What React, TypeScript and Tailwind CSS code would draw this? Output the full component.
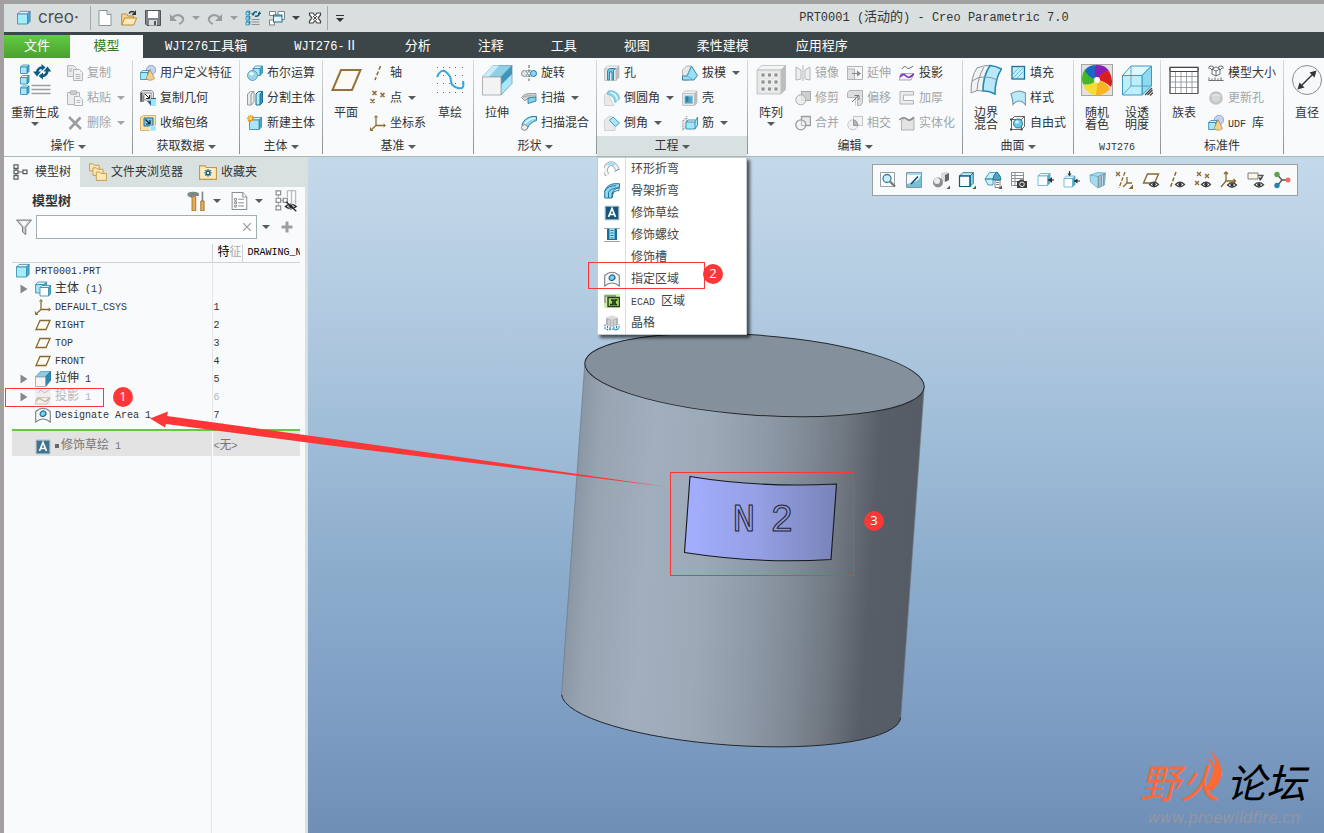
import type { ReactNode } from "react";
import clsx from "clsx";

/* ---------- drawing helpers ---------- */

const Cube = ({
  x,
  y,
  s,
  d,
  front = "#a8e6fb",
  top = "#e4f8fe",
  side = "#4ea9cf",
  line = "#2f86ab",
}: {
  x: number;
  y: number;
  s: number;
  d: number;
  front?: string;
  top?: string;
  side?: string;
  line?: string;
}) => (
  <g stroke={line} strokeWidth=".8" strokeLinejoin="round">
    <path d={`M${x} ${y}l${d} ${-d}h${s}l${-d} ${d}z`} fill={top} />
    <path d={`M${x + s} ${y}l${d} ${-d}v${s}l${-d} ${d}z`} fill={side} />
    <rect x={x} y={y} width={s} height={s} fill={front} />
  </g>
);

const GrayCube = ({ x, y, s, d }: { x: number; y: number; s: number; d: number }) => (
  <Cube x={x} y={y} s={s} d={d} front="#e6e6e6" top="#f4f4f4" side="#bdbdbd" line="#b9bcbe" />
);

const Eye = ({ x = 8.5, y = 12.5 }: { x?: number; y?: number }) => (
  <g>
    <path
      d={`M${x - 4.5} ${y}q4.5 -4.5 9 0q-4.5 4.5 -9 0z`}
      fill="#fff"
      stroke="#444"
      strokeWidth="1.3"
    />
    <circle cx={x} cy={y} r="1.7" fill="#333" />
  </g>
);

const Corner = () => <path d="M18 14.5v3.5h-3.5z" fill="#555" />;

const brown = "#8a6a2c";

const icons: Record<string, ReactNode> = {
  part: <Cube x={1.5} y={4} s={10} d={2.6} front="#a6ecff" />,
  newFile: (
    <g stroke="#8f9496" fill="#fff">
      <path d="M2 .5h8l4 4v11h-12z" />
      <path d="M10 .5v4h4" fill="#e3e3e3" />
    </g>
  ),
  open: (
    <g>
      <path d="M.7 15V4h5l1 2h6v3" fill="#f3d48f" stroke="#b98d3c" />
      <path d="M.7 15l3-7h12l-3 7z" fill="#fde9b5" stroke="#b98d3c" />
      <path d="M8 3.500q2-3 5-1.500" fill="none" stroke="#333" strokeWidth="1.400" />
      <path d="M15 0v5h-4.500z" fill="#333" />
    </g>
  ),
  save: (
    <g>
      <path d="M.5 .5h15v15h-13.500l-1.500-1.500z" fill="#7d8386" stroke="#4f5558" />
      <rect x="3" y="1" width="10" height="7" fill="#fff" />
      <rect x="4" y="10" width="8" height="5.500" fill="#d8dcde" />
      <rect x="9" y="11" width="2" height="4" fill="#4f5558" />
    </g>
  ),
  undo: (
    <g fill="none" stroke="#9a9d9f" strokeWidth="2">
      <path d="M3 8q4-4 8-2.500q4 2 3 5q-1 2.500-4 3.500" />
      <path d="M1 4v7h7z" fill="#9a9d9f" stroke="none" />
    </g>
  ),
  redo: (
    <g fill="none" stroke="#9a9d9f" strokeWidth="2">
      <path d="M13 8q-4-4-8-2.500q-4 2-3 5q1 2.500 4 3.500" />
      <path d="M15 4v7h-7z" fill="#9a9d9f" stroke="none" />
    </g>
  ),
  regen: (
    <g>
      <Cube x={1} y={2} s={3} d={1} />
      <Cube x={1} y={7} s={3} d={1} />
      <Cube x={1} y={12} s={3} d={1} />
      <path d="M6.500 9.500h8M6.500 12h8M6.500 14.500h8" stroke="#8d9294" />
      <path d="M8 4q1.500-3 4-2M14.500 3.500q-1.500 3.500-4.500 2.500" fill="none" stroke="#0e5c82" strokeWidth="1.600" />
      <path d="M6 3.500h4l-2 2.500zM12.500 4h4l-2-2.700z" fill="#0e5c82" />
    </g>
  ),
  windows: (
    <g fill="#fff" stroke="#7c8184">
      <path d="M.5 1.500h6v4h-6zM9 1.500h6.500v8H9z" />
      <path d="M.5 10h5v5h-5z" />
      <rect x="4.500" y="5" width="8.500" height="7" fill="#e2f6fd" stroke="#1c6d94" />
      <path d="M4.500 6h8.500" stroke="#1c6d94" />
    </g>
  ),
  closeWin: (
    <g>
      <path
        d="M2.500 3h3.500l2 2.500L10 3h3.500v2L11 8l2.500 3v2H10l-2-2.500L6 13H2.500v-2L5 8 2.500 5z"
        fill="#fff"
        stroke="#444"
        strokeWidth="1.200"
      />
      <path d="M6 6l4 4M10 6l-4 4" stroke="#444" />
    </g>
  ),
  copy: (
    <g fill="#e9e9e9" stroke="#b3b6b8">
      <path d="M.5 .5h6l3 3v8h-9z" />
      <path d="M6.500 4.500h6l3 3v8h-9z" fill="#f2f2f2" />
      <path d="M8.500 9.500h5M8.500 11.500h5M8.500 13.500h5M2 4h3M2 6h3" />
    </g>
  ),
  paste: (
    <g fill="#ececec" stroke="#b3b6b8">
      <path d="M.5 2.500h12v12h-12z" />
      <path d="M3.500 .8h6v3.500h-6z" fill="#cfcfcf" />
      <path d="M7.500 6.500h5l3 3v6h-8z" fill="#f6f6f6" />
      <path d="M9.500 10.500h4M9.500 12.500h4" />
    </g>
  ),
  del: <path d="M2 2l12 12M13.500 2.500L2.500 14" stroke="#9b9d9e" strokeWidth="2.600" />,
  udf: (
    <g>
      <circle cx="11" cy="5" r="4.700" fill="#c3d3f3" stroke="#8296c6" strokeWidth=".8" />
      <Cube x={0.600} y={7.500} s={7} d={2} />
      <path d="M10 4.500l4.500 9q-4.500 3.500-8.500 0z" fill="#f0d190" stroke="#b48d48" strokeWidth=".8" />
    </g>
  ),
  copyGeom: (
    <g>
      <path d="M.5 2.500l2-2h9l2 2v8h-3M.5 2.500v9h3v-6" fill="#e3e3e3" stroke="#8b8f91" />
      <path d="M.5 2.500h2v9h-2z" fill="#54595b" />
      <rect x="4" y="3" width="7" height="7" fill="#fff" stroke="#777" strokeWidth=".8" />
      <path d="M5 4l4 4M9.500 5v3.500h-3.500" stroke="#222" fill="none" />
      <path d="M7 11h4v-3h5v8h-5" fill="#1c6d94" />
      <path d="M11 9h5v7h-5z" fill="#9ce6fb" />
    </g>
  ),
  shrink: (
    <g>
      <path d="M.5 2.500l3-2h12v10l-3 5H.5z" fill="#fce2a8" stroke="#cfa453" strokeWidth=".8" />
      <path d="M4 3h9v8H4z" fill="#7ec9e4" stroke="#1c6d94" />
      <path d="M5.500 4.500l4 4M10 5v4H6" stroke="#123" strokeWidth="1.200" fill="none" />
      <path d="M10 11h6v5h-6z" fill="#9ce6fb" stroke="#fff" strokeWidth=".6" />
    </g>
  ),
  boolean: (
    <g>
      <Cube x={6} y={3.500} s={7} d={2.500} />
      <circle cx="5.500" cy="10.500" r="5" fill="#9ed5ea" stroke="#3f93b8" strokeWidth=".8" />
      <ellipse cx="4.500" cy="8.800" rx="2.300" ry="1.800" fill="#e9f9fe" />
    </g>
  ),
  split: (
    <g strokeWidth="1">
      <path d="M.5 4l3-2.500h3.500v11l-3 2.500H.5z" fill="#e6ebee" stroke="#959b9e" />
      <path d="M4 15V4l3-2.500" fill="none" stroke="#959b9e" />
      <path d="M9 4l2.500-2.500h4v11L13 15H9z" fill="#b4ecfc" stroke="#1c6d94" />
      <path d="M13 15V4l2.500-2.500v11z" fill="#3d93b8" stroke="#1c6d94" />
    </g>
  ),
  newBody: (
    <g>
      <Cube x={2.500} y={5} s={9.500} d={2.500} />
      <path d="M3.500 0v7M0 3.500h7M1 1l5 5M6 1L1 6" stroke="#f29a1d" strokeWidth="1.300" />
      <circle cx="3.500" cy="3.500" r="1.200" fill="#fff3b0" />
    </g>
  ),
  axis: <path d="M10.500 1L5 15" stroke={brown} strokeWidth="1.500" strokeDasharray="4 2" />,
  point: (
    <path
      d="M2.500 1l4 4M6.500 1l-4 4M10.500 3l4 4M14.500 3l-4 4M.5 9l4 4M4.500 9l-4 4"
      stroke={brown}
      strokeWidth="1.500"
    />
  ),
  csys: (
    <g fill="none" stroke={brown} strokeWidth="1.300">
      <path d="M6 1v9.500h9M6 10.500L1 15" />
      <path d="M4.500 2.500L6 .5l1.500 2M13.500 9l2 1.500-2 1.500M.5 12.500V15.500H3" strokeWidth="1" />
    </g>
  ),
  plane: <path d="M5 3.500h10l-4 9H1z" fill="#fdfbf5" stroke={brown} strokeWidth="1.300" />,
  revolve: (
    <g>
      <circle cx="3.500" cy="8.500" r="3" fill="#dfe3e5" stroke="#888" />
      <circle cx="12.500" cy="8.500" r="3" fill="#8bd8f1" stroke="#1c7096" />
      <path d="M4 5.500h8M4 11.500h8" stroke="#8cb" />
      <path d="M8 0v16" stroke="#555" strokeDasharray="3 1.500" />
    </g>
  ),
  sweep: (
    <g strokeWidth=".8">
      <path d="M.5 7.500Q3 3.500 8 3.500h7v4l-6 3-2-2-3 2.500z" fill="#cfd3d5" stroke="#888e90" />
      <path d="M7 8l8-1v4l-8 2.500z" fill="#86d2ec" stroke="#1c7096" />
      <path d="M2 7.500q3-2.500 12-1.500" fill="none" stroke="#999" />
    </g>
  ),
  sweptBlend: (
    <g strokeWidth=".9">
      <path d="M1 10Q3 3 11 1.500h4.500v4Q9 7 6 14z" fill="#8fd8f0" stroke="#1c7096" />
      <path d="M3 10.500Q6 4 14 3" fill="none" stroke="#e7f9ff" strokeWidth="1.500" />
      <ellipse cx="3.500" cy="12.500" rx="3" ry="2.800" fill="#eee" stroke="#777" />
    </g>
  ),
  hole: (
    <g>
      <GrayCube x={0.500} y={4} s={11.500} d={3} />
      <path d="M3.500 15V5.500l2-2h6l-2 2V15H8V7H5.500v8z" fill="#6ec6e4" stroke="#16789f" strokeWidth=".8" />
    </g>
  ),
  round: (
    <g>
      <path d="M.5 5l4-4H10L6 5v3l4 7.500H.5z" fill="#e9e9e9" stroke="#c9cbcc" strokeWidth=".8" />
      <path d="M4.500 1H8q7 1 7.500 8L11 12.500Q10.500 5.500 3 4z" fill="#8ed7f0" stroke="#5fb0d0" strokeWidth=".8" />
      <path d="M6.500 2.500q6 1 7 8" stroke="#e5f9ff" strokeWidth="1.500" fill="none" />
    </g>
  ),
  chamfer: (
    <g>
      <path d="M.5 5l4-3.500H8L5 5l6 5v5.500H.5z" fill="#e9e9e9" stroke="#c9cbcc" strokeWidth=".8" />
      <path d="M9 2l6.500 6L11.500 11.500 5.500 5.500z" fill="#a4e7fb" stroke="#2f8bb0" strokeWidth=".8" />
    </g>
  ),
  draft: (
    <g strokeWidth=".8">
      <path d="M.5 5l4-4h5l-3 14h-6z" fill="#e3e8ea" stroke="#a3a9ac" />
      <path d="M9.500 1l6 9.500L12 15H.5v-4h4.500z" fill="#9adff5" stroke="#1c7096" />
      <path d="M9.500 1L5 11l7 4" stroke="#5aaccb" fill="none" />
    </g>
  ),
  shell: (
    <g>
      <GrayCube x={0.500} y={3.500} s={12} d={2.500} />
      <rect x="3" y="6" width="7.500" height="7.500" fill="#5aa5c4" stroke="#8ecbe0" />
      <path d="M3.500 6.500h3v4l-3 3z" fill="#2b7da1" />
    </g>
  ),
  rib: (
    <g strokeWidth=".9">
      <path d="M.8 6l4-4.500v9l-4 5z" fill="#e4e4e4" stroke="#888" strokeDasharray="1.500 1" />
      <path d="M4 7h9l2.500-5v8L13 14H4z" fill="#a5e7fb" stroke="#2f8bb0" />
      <path d="M4 7l2-2h8M13 7v7" fill="none" stroke="#2f8bb0" />
    </g>
  ),
  mirror: (
    <g fill="#eee" stroke="#b3b6b8">
      <path d="M1 2l5 3v9l-5 1zM15 2l-5 3v9l5 1z" />
      <path d="M8 0v16" />
    </g>
  ),
  trim: (
    <g stroke="#a8abad">
      <rect x="6.500" y="1.500" width="9" height="9" fill="#cfcfcf" />
      <circle cx="5.800" cy="9.800" r="5" fill="#ececec" fillOpacity=".8" />
    </g>
  ),
  merge: (
    <g stroke="#9a9ea0" fill="none" strokeWidth="1.300">
      <path d="M6.500 5V1.500h9v9h-5" fill="#e9e9e9" />
      <circle cx="5.800" cy="9.800" r="5" fill="#f3f3f3" />
      <path d="M6.500 10.500v-5.500M6.500 10.500h4" strokeWidth=".7" />
    </g>
  ),
  extend: (
    <g stroke="#b0b3b5" fill="#eee">
      <path d="M.5 1.500h15v13H.5z" fill="#f6f6f6" />
      <path d="M.5 4h7v10.500h-7z" fill="#e0e0e0" />
      <path d="M5 8.500h6" stroke="#888" />
      <path d="M10 5.500l4 3-4 3z" fill="#888" stroke="none" />
    </g>
  ),
  offset: (
    <g stroke="#b0b3b5">
      <path d="M.5 2.500l2-2h13v12l-2 3h-3V7.500H.5z" fill="#dedede" />
      <path d="M.5 7.500h8v8" fill="none" strokeDasharray="2 1" />
      <path d="M5 12l6-6M7.500 5.500H12V10" fill="none" stroke="#777" />
    </g>
  ),
  intersect: (
    <g stroke="#c3c6c8">
      <rect x="6.500" y="1.500" width="9" height="9" fill="#f3f3f3" />
      <circle cx="5.800" cy="9.800" r="5" fill="#f3f3f3" />
      <path d="M6.500 5v5.500h4.500Q10 5 6.500 5z" fill="#b7b7b7" stroke="#999" />
    </g>
  ),
  project: (
    <g fill="none">
      <path d="M3 4q2.500-4 4.500-1.500T14 1" stroke="#666" />
      <path d="M2 8.500h13l-3 6.500H0z" fill="#eef0f1" stroke="#888" strokeWidth=".7" />
      <path d="M1 12q3-4 5.500-1.500T11 12t3.500-3" stroke="#7a2fc0" strokeWidth="1.600" />
    </g>
  ),
  projectGray: (
    <g fill="none">
      <rect width="16" height="16" fill="#efefef" />
      <path d="M3 4q2.500-4 4.500-1.500T14 1" stroke="#bbb" />
      <path d="M2 8.500h13l-3 6.500H0z" fill="#f5f2e8" stroke="#c4bda6" strokeWidth=".8" />
      <path d="M1 12q3-4 5.500-1.500T11 12t3.500-3" stroke="#c4bda6" strokeWidth="1.600" />
    </g>
  ),
  thicken: <path d="M1 1.500h13.500v3.500H4.500v5.500h10V14H1z" fill="#ececec" stroke="#b0b3b5" />,
  solidify: (
    <g stroke="#b0b3b5">
      <path d="M2.500 6q3-5 6-2T15 3v12H2.500z" fill="#e3e3e3" />
      <path d="M.5 5q4-4 7-1t7.500-2" fill="none" stroke="#858a8c" strokeWidth="1.600" />
    </g>
  ),
  fill: (
    <g>
      <rect x="2" y="1.500" width="12.500" height="12.500" fill="#c0edfb" stroke="#1c7096" strokeWidth="1.300" />
      <path d="M3 9l6-6.500M3 13l10-10M7 13l6.500-6.500" stroke="#6dbddb" />
    </g>
  ),
  style: <path d="M1 4q7-5 14.500-1v12q-3-4-6.500-4t-6 3.500Q3 9 1 4z" fill="#b9eafa" stroke="#7f9ba8" strokeWidth="1.200" />,
  freestyle: (
    <g fill="none" stroke="#555" strokeWidth=".9">
      <path d="M1.500 4.500h10v10h-10zM1.500 4.500l3-3h10l-3 3M14.500 1.500v10l-3 3" />
      <circle cx="8" cy="8.500" r="4.500" fill="#6fc6e6" stroke="#1c7096" />
      <ellipse cx="7" cy="7" rx="2" ry="1.600" fill="#d5f4fd" stroke="none" />
      <path d="M0 3.500h2v2H0zM10.500 13.500h2v2h-2zM0 13.500h2v2H0z" fill="#444" stroke="none" />
    </g>
  ),
  modelSize: (
    <g fill="none" stroke="#5c6163" strokeWidth=".9">
      <path d="M1 4Q0 1 3 1t2.500 2M15 4q1-3-2-3t-2.500 2M4 4l4-2 4 2v5l-4 2-4-2zM4 4l4 2 4-2M8 6v5M2 3l2 2M14 3l-2 2" />
      <path d="M.5 15.500h15M1 15v-2.500M4 15v-1.500M7 15v-2.500M10 15v-1.500M13 15v-2.500" />
    </g>
  ),
  updateHole: (
    <g>
      <circle cx="8" cy="8" r="6.800" fill="#c3c5c6" />
      <circle cx="8" cy="8" r="4.300" fill="#d6d7d8" />
      <path d="M4 6q4-3 8 0" stroke="#eee" fill="none" />
    </g>
  ),
  treeTab: (
    <g fill="#fff" stroke="#565b5d" strokeWidth="1.200">
      <path d="M3 3v10M3 8h9" />
      <path d="M1 .8h4v3.500H1zM1 6.200h4v3.500H1zM1 11.600h4v3.500H1zM10 6.200h4v3.500h-4z" />
    </g>
  ),
  folders: (
    <g fill="#fde7b4" stroke="#c2984a" strokeWidth=".8">
      <path d="M.5 7V.8h3l1 1.200h4.500v5z" />
      <path d="M3.500 11V4.300h3l1 1.200h5V11z" />
      <path d="M6.500 15.500V8h3l1 1.300h5v6.200z" />
    </g>
  ),
  favorites: (
    <g>
      <path d="M.5 14.500v-12h5l1 1.500h9v10.500z" fill="#fdebc0" stroke="#c2984a" />
      <path d="M8 5.500v6.500M4.800 8.800h6.400M5.700 6.400l4.600 4.700M10.300 6.400l-4.600 4.700" stroke="#0e5c82" strokeWidth="1.200" />
      <circle cx="8" cy="8.800" r="1" fill="#fff" />
    </g>
  ),
  tools: (
    <g>
      <path d="M.5 1.500q4-2 9 0v2.500H7V4H4v1.500L.5 4z" fill="#7e878b" />
      <path d="M4 4.500h3V16H4z" fill="#e5ad55" stroke="#8f621d" strokeWidth=".6" />
      <path d="M11.700 .5H13V9h-1.300z" fill="#7e878b" />
      <path d="M11 8h2.700v8H11z" fill="#e5ad55" stroke="#8f621d" strokeWidth=".6" />
    </g>
  ),
  docList: (
    <g fill="#fff" stroke="#8a8f91" strokeWidth=".9">
      <path d="M1 .5h9.500l3.500 4v11H1z" />
      <path d="M10.500 .5v4H14M6.500 6.500h5M6.500 9.500h5M6.500 12.500h5" />
      <circle cx="4" cy="6.500" r="1" />
      <circle cx="4" cy="9.500" r="1" />
      <circle cx="4" cy="12.500" r="1" />
    </g>
  ),
  treeCols: (
    <g fill="#fff" stroke="#8a8f91" strokeWidth=".9">
      <path d="M2.500 2v12M2.500 7.500h4M9 .5h6M9 .5V5M12 .5v9M15 .5v10" stroke="#bbb" />
      <path d="M.8 .6h3.300v3H.8zM.8 6h3.300v3H.8zM.8 11.500h3.300v3H.8zM6 6h3v3H6z" />
      <path d="M7.500 12q4-3.500 8 0-4 3.300-8 0z" fill="#ddd" stroke="#222" />
      <circle cx="11.500" cy="12" r="1.500" fill="#222" />
      <path d="M8 8.500l7.500 7" stroke="#222" />
    </g>
  ),
  filter: (
    <g>
      <path d="M.5 1h15L9.800 8v7.500L6.500 13V8z" fill="#c9cccd" stroke="#6d7173" strokeWidth=".9" />
      <path d="M3.500 2.200h9L8 7.500z" fill="#fff" />
    </g>
  ),
  body: (
    <g>
      <Cube x={0.600} y={3.500} s={8.500} d={2.500} />
      <Cube x={5} y={6.500} s={8.500} d={2} front="#fff" />
    </g>
  ),
  extrude: (
    <g strokeWidth=".8">
      <path d="M.5 6l5-5.500h10L10.500 6z" fill="#8bcbe4" stroke="#5a9ab5" />
      <path d="M10.500 6l5-5.500v9l-5 6z" fill="#2f88ad" stroke="#1c6d94" />
      <path d="M.5 6h10v9.500H.5z" fill="#f5f5f5" stroke="#9da1a3" />
    </g>
  ),
  designate: (
    <g>
      <path d="M.7 15V4.500Q8-2 15.300 4.500V15Q8 9 .7 15z" fill="#f5f7f8" stroke="#7b8184" strokeWidth="1.100" />
      <ellipse cx="8" cy="6.800" rx="3" ry="2.600" fill="#7fd0ee" stroke="#1c6d94" strokeWidth="1.200" transform="rotate(-30 8 6.800)" />
    </g>
  ),
  cosmetic: (
    <g>
      <rect x="2" y="2" width="12" height="12" fill="#16567a" />
      <rect x="1.500" y="1.500" width="13" height="13" fill="none" stroke="#16567a" strokeWidth="1.600" strokeDasharray="1 1" />
      <path d="M4.500 12L8 3.500 11.500 12M5.800 9.500h4.400" fill="none" stroke="#fff" strokeWidth="1.700" />
    </g>
  ),
  toroidal: (
    <g fill="none">
      <path d="M3.500 14Q-1 8.500 4 4t9.500 4.500" stroke="#9aa1a5" strokeWidth="4.600" />
      <path d="M3.500 14Q-1 8.500 4 4t9.500 4.500" stroke="#eef2f3" strokeWidth="3" />
      <path d="M4 4q3.500-3 7 0" stroke="#a8dff1" strokeWidth="3" />
      <path d="M10.500 10.500l5-2.500" stroke="#5c9fba" />
    </g>
  ),
  spinal: (
    <g strokeWidth=".9" stroke="#1c6d94">
      <path d="M.7 14V8Q3 1.500 10 .7h5.500v4Q9 6.500 8 15H.7z" fill="#8fd8f0" />
      <path d="M.7 8Q4 2.500 12 2.700M4.500 15V9.500Q6 5 15.500 4.700" fill="none" />
      <path d="M8 15V11q1-3 7-3.500V4.700Q9 6 8 11" fill="#dff5fc" />
    </g>
  ),
  thread: (
    <g>
      <path d="M0 1.500h16M0 14.500h16" stroke="#9ea3a5" />
      <path d="M3 1.500h10v11H3z" fill="#a6e6fa" />
      <path d="M3 1.500h2.500v11H3zM10.500 1.500H13v11h-2.500z" fill="#1c7096" />
      <path d="M6.500 3.500h3M6.500 6h3M6.500 8.500h3M6.500 11h3" stroke="#1c7096" strokeWidth="1.200" />
      <path d="M3 12.500h10" stroke="#1c7096" />
    </g>
  ),
  ecad: (
    <g>
      <rect width="16" height="14" y="1" fill="#cdebb3" />
      <path d="M1 10V3h11" fill="none" stroke="#888" strokeWidth="1.300" />
      <rect x="4" y="4.500" width="11.500" height="9" fill="#a5d86e" stroke="#263e14" strokeWidth="1.400" />
      <path d="M6 11.500h3V7H7M13.500 7H11v4.500h2" fill="none" stroke="#1b2c10" strokeWidth="1.600" />
    </g>
  ),
  lattice: (
    <g>
      <path d="M2 3l6-2.500L14 3v7l-6 2.500L2 10z" fill="#b3b6b8" />
      <path d="M2 3l6 2 6-2-6-2.500z" fill="#dcdcdc" />
      <path d="M8 5v8M5 5v6M11 5v6" stroke="#f3f3f3" strokeWidth=".8" />
      <path d="M1 9.500v4l3 1.500 4-1 4 1 3-1.500v-4M3.500 11v4M6 12v3M10 12v3M12.500 11v4" stroke="#2487b1" fill="none" strokeWidth="1.100" strokeDasharray="2 .8" />
    </g>
  ),
};

// graphics toolbar icons, drawn on an 18px grid
const viewIcons: [string, ReactNode][] = [
  [
    "重新调整",
    <g>
      <path d="M1.500 1.500h14v14h-14z" fill="#fff" stroke="#9ba0a2" />
      <circle cx="8" cy="7.500" r="4" fill="#cbeefa" stroke="#2f80a3" strokeWidth="1.300" />
      <path d="M11 10.500l5 5" stroke="#777" strokeWidth="2.300" />
    </g>,
  ],
  [
    "重画",
    <g>
      <path d="M1.500 1.500h15v15h-15z" fill="#9fdcf1" stroke="#8e9496" />
      <path d="M2 4h14Q14 12 2 13z" fill="#f6fcfe" />
      <path d="M16 4v12H2v-3Q14 12 16 4z" fill="#74c1de" />
      <path d="M6 13l7-7.500" stroke="#0f4c69" strokeWidth="1.600" />
    </g>,
  ],
  [
    "渲染选项",
    <g>
      <path d="M9 2l5-1.500 3 1.500v7l-4 2-4-1.500z" fill="#d8dadb" />
      <path d="M13 4l4-2v7l-4 2z" fill="#636769" />
      <circle cx="6" cy="11.500" r="5" fill="#8c9092" />
      <circle cx="5" cy="10" r="3" fill="#ededed" />
      <Corner />
    </g>,
  ],
  [
    "显示样式",
    <g>
      <Cube x={1.500} y={5} s={10.500} d={3.300} front="#f4fcff" top="#c4effc" side="#8fd4ec" line="#0e5c82" />
      <path d="M1.500 5h10.500v10.500H1.500z" fill="none" stroke="#0e5c82" strokeWidth="1.200" />
      <Corner />
    </g>,
  ],
  [
    "已保存方向",
    <g strokeWidth=".9">
      <path d="M1 8l4.500-6.500H12L9 8zM1 8l3 6h5V8z" fill="#c7f0fc" stroke="#3f91b3" />
      <path d="M9 8q0-4 4-7 4 4 4 8H9z" fill="#4ea4c7" stroke="#1c6d94" />
      <path d="M11 9.500h5v7h-5z" fill="#fff" stroke="#777" />
      <path d="M12 11.500h3M12 13.500h3" stroke="#777" />
      <Corner />
    </g>,
  ],
  [
    "视图管理器",
    <g>
      <path d="M1.500 1.500h12v13h-12zM1.500 4.500h12M1.500 7.500h12M1.500 10.500h12M5 1.500v13" fill="#fff" stroke="#8a8f91" />
      <path d="M7 10h2l1-1.500h3l1 1.500h3v7H7z" fill="#3c4143" />
      <circle cx="12" cy="13.300" r="2.300" fill="#3c4143" stroke="#fff" strokeWidth=".9" />
    </g>,
  ],
  [
    "剖面",
    <g>
      <Cube x={1} y={5} s={9.500} d={2.500} front="#fff" line="#56acd0" />
      <path d="M11 9h6" stroke="#333" strokeWidth="1.200" />
      <path d="M15 6l-3.500 3 3.500 3z" fill="#333" />
    </g>,
  ],
  [
    "拖动剖面",
    <g>
      <Cube x={1} y={7.500} s={8.500} d={2.500} front="#fff" line="#56acd0" />
      <path d="M6.500 0v4M11 10h6" stroke="#333" strokeWidth="1.200" />
      <path d="M4.500 2.500h4l-2 2.700zM14.500 7.500l-3.500 2.500 3.500 2.500z" fill="#333" />
    </g>,
  ],
  [
    "透视图",
    <g strokeWidth=".8">
      <path d="M1 4l8-2.500 7.500.5-1 12L9 17 1.500 11z" fill="#a4ddf1" stroke="#6ba6be" />
      <path d="M9 5.500l7.500-3.500M9 5.500V17M1 4l8 1.500" stroke="#6ba6be" fill="none" />
      <path d="M9 5.500L16 2l-1 12-6 3z" fill="#7e9daa" />
      <path d="M11 5v10.500M13.500 4v10.500" stroke="#d7eef6" />
    </g>,
  ],
  [
    "基准显示过滤器",
    <g stroke={brown} fill="none" strokeWidth="1.300">
      <path d="M1 1l4 4M5 1L1 5" />
      <path d="M10 1L4 17" strokeDasharray="4 1.500" />
      <path d="M12 6v6h5M12 12l-4 4" />
      <Corner />
    </g>,
  ],
  [
    "平面显示",
    <g>
      <path d="M5.500 3h11l-4 9H1.500z" fill="#fff" stroke={brown} strokeWidth="1.400" />
      <Eye x={12} y={13.500} />
    </g>,
  ],
  [
    "轴显示",
    <g>
      <path d="M8 1L2.500 16" stroke={brown} strokeWidth="1.500" strokeDasharray="4 1.800" />
      <Eye x={12} y={13.500} />
    </g>,
  ],
  [
    "点显示",
    <g>
      <path d="M3 1l4 4M7 1L3 5M11 3l4 4M15 3l-4 4M1 10l4 4M5 10l-4 4" stroke={brown} strokeWidth="1.300" />
      <Eye x={12} y={13.500} />
    </g>,
  ],
  [
    "坐标系显示",
    <g>
      <path d="M6 1v9h9M6 10l-5 6M4 3l2-2 2 2M13.500 8l2 2-2 2" fill="none" stroke={brown} strokeWidth="1.300" />
      <Eye x={12} y={14} />
    </g>,
  ],
  [
    "注释显示",
    <g>
      <path d="M1 2h10v6H1z" fill="#fff7df" stroke="#7a7f81" />
      <path d="M11 4.500h5l-2.500 4" fill="none" stroke="#555" strokeWidth="1.300" />
      <path d="M11.500 6.500h4.500l-3 3.500z" fill="#444" />
      <Eye x={12} y={13.800} />
    </g>,
  ],
  [
    "旋转中心",
    <g>
      <path d="M4.500 4L9 9l-4.500 5.500M9 9h6" fill="none" stroke="#555" strokeWidth="1.400" />
      <circle cx="4" cy="3.500" r="2.700" fill="#5aa64d" />
      <circle cx="15" cy="9" r="2.500" fill="#ef6a62" />
      <circle cx="4" cy="14.500" r="2.700" fill="#2d82a8" />
    </g>,
  ],
];

// large ribbon icons on a 32px grid
const bigIcons: Record<string, ReactNode> = {
  regen: (
    <g>
      <Cube x={1.500} y={3} s={6.500} d={2} />
      <Cube x={1.500} y={13.500} s={6.500} d={2} />
      <Cube x={1.500} y={24} s={6.500} d={2} />
      <path d="M12.500 21.500h19M12.500 25.500h19M12.500 29.500h19" stroke="#9a9ea0" strokeWidth="1.700" />
      <path d="M18 8q1-4 5-4.500M28.500 7q-1 4.500-5 5" fill="none" stroke="#0e5c82" strokeWidth="2.600" />
      <path d="M14 7.500h8l-4 5zM24.500 7.500h8l-4-5zM22.500 0v7l4-3.500zM24 8.500v7l-4.500-3.500z" fill="#0e5c82" />
    </g>
  ),
  plane: <path d="M11 6h19.500l-8.500 20H2.500z" fill="#fcfaf5" stroke="#94733a" strokeWidth="2" />,
  sketch: (
    <g>
      {[3, 9, 15, 21, 28].map((x) =>
        [3, 11, 19, 28].map((y) => <rect key={`${x}-${y}`} x={x} y={y} width="1" height="1" fill="#666" />),
      )}
      <path d="M3 13Q7 4 12 8t5 9 7 7 5-7" fill="none" stroke="#37a5d8" strokeWidth="2" />
    </g>
  ),
  extrude: (
    <g strokeWidth=".8">
      <path d="M1.500 13L12 1.500h19L20 13z" fill="#8fd0e9" stroke="#6d9fb3" />
      <path d="M1.500 13L12 1.500h6L8 13z" fill="#c9ecf8" />
      <path d="M20 13L31 1.500v18L20 31z" fill="#a9e6fa" stroke="#6d9fb3" />
      <path d="M31 1.500L20 13v8L31 10z" fill="#4294b8" />
      <path d="M1.500 13H20v18H1.500z" fill="#f3f3f3" stroke="#9da1a3" />
    </g>
  ),
  pattern: (
    <g>
      <GrayCube x={2} y={6} s={24} d={4.500} />
      {[6, 12.500, 19].map((x) =>
        [9, 16, 23].map((y) => (
          <path key={`${x}-${y}`} d={`M${x} ${y + 4}v-4h4v4z`} fill="#8e9294" stroke="#fff" strokeWidth=".7" />
        )),
      )}
    </g>
  ),
  boundary: (
    <g fill="#d7f2fb" stroke="#8b9498" strokeWidth="1">
      <path d="M1 29Q1 12 7 4q7-3 13-2.500Q13 12 13 27Q7 25 1 29z" fill="#f1f3f4" />
      <path d="M13 27Q13 12 20 1.500q6 .5 11.500 3.500Q25 15 25 30q-6-3.500-12-3z" fill="#b9e9f9" stroke="#2089b7" strokeWidth="1.500" />
      <path d="M2 17q7-5 13-4 7 0 12 3" fill="none" stroke="#7f9aa5" />
      <path d="M14 3q-6 10-7 23" fill="none" />
    </g>
  ),
  random: (
    <g>
      <rect x=".5" y=".5" width="31" height="31" fill="#e3e1df" stroke="#a5a5a5" />
      <path d="M16 16Q10 8 15 1q9-1 13 6-7 1-12 9z" fill="#8b1fb5" />
      <path d="M16 16q5-9 12-9 5 9 2 16-6-6-14-7z" fill="#d9201e" />
      <path d="M16 16q9 1 13 9-6 7-14 6-1-7 1-15z" fill="#f9b421" />
      <path d="M16 16q1 9-2 15-9-2-12-10 7 1 14-5z" fill="#f5dc31" />
      <path d="M16 16Q9 22 2 20-1 12 4 5q3 8 12 11z" fill="#43b629" />
      <path d="M16 16Q6 13 4 6q4-5 11-5-3 8 1 15z" fill="#1868c5" />
      <circle cx="16" cy="16" r="3" fill="#fff" />
    </g>
  ),
  transparent: (
    <g stroke="#3a9bc2" strokeWidth="1">
      <path d="M1.500 11.500L10 2h20.500L21 11.500z" fill="#dff6fd" />
      <path d="M21 11.500L30.500 2v20L21 31z" fill="#8fd9f1" />
      <path d="M1.500 11.500H21V31H1.500z" fill="#b8ecfb" fillOpacity=".9" />
      <path d="M10 2v20L1.500 31M10 22h20.500" fill="none" strokeWidth=".8" />
      <path d="M24 31l7-7M26.500 31l5-5M29 31.500l3-3" stroke="#444" strokeWidth="1.300" />
    </g>
  ),
  table: (
    <g stroke="#888d8f">
      <rect x="2" y="3" width="28" height="26.500" fill="#fff" />
      <path d="M2 12.500h28M2 18h28M2 23.500h28M7.500 8v21M13 8v21M18.500 8v21M24 8v21" strokeWidth=".8" />
      <path d="M2 3.500h28v4H2z" fill="#fff" stroke="#444" />
      <path d="M2 3v26.500h28V3" fill="none" stroke="#555" />
    </g>
  ),
  diameter: (
    <g>
      <circle cx="16" cy="16" r="14.500" fill="#f7f8f9" stroke="#8a8f91" />
      <path d="M9 23L23 9" stroke="#333" strokeWidth="1.500" />
      <path d="M6.500 25.500l2-7 5 5zM25.500 6.500l-2 7-5-5z" fill="#333" />
    </g>
  ),
};

const Icon = ({ name, className = "size-4" }: { name: string; className?: string }) => (
  <svg viewBox="0 0 16 16" className={clsx("shrink-0", className)} aria-hidden="true">
    {icons[name]}
  </svg>
);

const Caret = ({ className = "text-[#555a5c]" }: { className?: string }) => (
  <svg viewBox="0 0 8 4" className={clsx("h-1 w-2 shrink-0", className)} aria-hidden="true">
    <path d="M0 0h8l-4 4z" fill="currentColor" />
  </svg>
);

// Latin runs take half the advance of the Chinese glyphs around them
const Mixed = ({ text, latin = "text-[10px]" }: { text: string; latin?: string }) => (
  <span className="whitespace-pre">
    {text.split(/([\x20-\x7e]+)/).map((part, i) =>
      i % 2 ? (
        <span key={i} className={latin}>
          {part}
        </span>
      ) : (
        part
      ),
    )}
  </span>
);

/* ---------- ribbon ---------- */

const Small = ({
  icon,
  label,
  menu,
  disabled,
}: {
  icon: string;
  label: string;
  menu?: boolean;
  disabled?: boolean;
}) => (
  <button
    disabled={disabled}
    className={clsx("flex h-[25px] items-center gap-1", disabled ? "text-[#a3a5a6]" : "text-[#333]")}
  >
    <Icon name={icon} />
    <span className="pt-[2px]">
      <Mixed text={label} />
    </span>
    {menu && (
      <span className="pl-[2px]">
        <Caret className={disabled ? "text-[#a3a5a6]" : "text-[#555a5c]"} />
      </span>
    )}
  </button>
);

const Big = ({ icon, lines, menu }: { icon: string; lines: string[]; menu?: boolean }) => (
  <button className="flex shrink-0 flex-col items-center pt-1 leading-3">
    <svg viewBox="0 0 32 32" className="mb-3 size-8" aria-hidden="true">
      {bigIcons[icon]}
    </svg>
    {lines.map((l) => (
      <span key={l}>{l}</span>
    ))}
    {menu && (
      <span className="pt-[2px]">
        <Caret />
      </span>
    )}
  </button>
);

const Col = ({ children }: { children: ReactNode }) => (
  <div className="flex shrink-0 flex-col">{children}</div>
);

const Group = ({
  title,
  width,
  menu,
  open,
  children,
}: {
  title: string;
  width: string;
  menu?: boolean;
  open?: ReactNode;
  children: ReactNode;
}) => (
  <>
    <section className={clsx("relative flex flex-col", width)}>
      <div className="flex h-[78px] items-start gap-2 pt-[2px] pl-[7px]">{children}</div>
      <button
        className={clsx("flex h-5 items-center justify-center gap-[3px] pt-[2px]", open && "bg-[#d9e0e2]")}
      >
        <Mixed text={title} />
        {menu && <Caret />}
      </button>
      {open}
    </section>
    <div className="my-[2px] w-px shrink-0 bg-gradient-to-b from-[#dadedf] to-[#8b9193]" />
  </>
);

const engineeringItems = [
  { icon: "toroidal", label: "环形折弯" },
  { icon: "spinal", label: "骨架折弯" },
  { icon: "cosmetic", label: "修饰草绘" },
  { icon: "thread", label: "修饰螺纹" },
  { icon: "", label: "修饰槽" },
  { icon: "designate", label: "指定区域" },
  { icon: "ecad", label: "ECAD 区域" },
  { icon: "lattice", label: "晶格" },
];

const EngineeringMenu = () => (
  <ul className="absolute top-[99px] left-0 z-20 w-full border border-[#c5cdcf] bg-white text-[#444] shadow-[3px_3px_3px_rgba(0,0,0,0.6)]">
    {engineeringItems.map(({ icon, label }) => (
      <li key={label}>
        <button className="flex h-[22px] w-full items-center">
          <span className="flex h-full w-7 items-center justify-center border-r border-[#dcdcdc]">
            {icon && <Icon name={icon} />}
          </span>
          <span className="pt-[2px] pl-[5px]">
            <Mixed text={label} />
          </span>
        </button>
      </li>
    ))}
  </ul>
);

const Ribbon = () => (
  <div className="relative z-10 flex h-[99px] border-b border-[#a9b8b9] bg-[#f8fafc] text-xs text-[#333]">
    <Group title="操作" width="w-32 shrink-0" menu>
      <Big icon="regen" lines={["重新生成"]} menu />
      <Col>
        <Small icon="copy" label="复制" disabled />
        <Small icon="paste" label="粘贴" disabled menu />
        <Small icon="del" label="删除" disabled menu />
      </Col>
    </Group>
    <Group title="获取数据" width="w-[106px] shrink-0" menu>
      <Col>
        <Small icon="udf" label="用户定义特征" />
        <Small icon="copyGeom" label="复制几何" />
        <Small icon="shrink" label="收缩包络" />
      </Col>
    </Group>
    <Group title="主体" width="w-[82px] shrink-0" menu>
      <Col>
        <Small icon="boolean" label="布尔运算" />
        <Small icon="split" label="分割主体" />
        <Small icon="newBody" label="新建主体" />
      </Col>
    </Group>
    <Group title="基准" width="w-[150px] shrink-0" menu>
      <Big icon="plane" lines={["平面"]} />
      <Col>
        <Small icon="axis" label="轴" />
        <Small icon="point" label="点" menu />
        <Small icon="csys" label="坐标系" />
      </Col>
      <Big icon="sketch" lines={["草绘"]} />
    </Group>
    <Group title="形状" width="w-[122px] shrink-0" menu>
      <Big icon="extrude" lines={["拉伸"]} />
      <Col>
        <Small icon="revolve" label="旋转" />
        <Small icon="sweep" label="扫描" menu />
        <Small icon="sweptBlend" label="扫描混合" />
      </Col>
    </Group>
    <Group title="工程" width="w-[150px] shrink-0" menu open={<EngineeringMenu />}>
      <Col>
        <Small icon="hole" label="孔" />
        <Small icon="round" label="倒圆角" menu />
        <Small icon="chamfer" label="倒角" menu />
      </Col>
      <Col>
        <Small icon="draft" label="拔模" menu />
        <Small icon="shell" label="壳" />
        <Small icon="rib" label="筋" menu />
      </Col>
    </Group>
    <Group title="编辑" width="w-[214px] shrink-0" menu>
      <Big icon="pattern" lines={["阵列"]} menu />
      <Col>
        <Small icon="mirror" label="镜像" disabled />
        <Small icon="trim" label="修剪" disabled />
        <Small icon="merge" label="合并" disabled />
      </Col>
      <Col>
        <Small icon="extend" label="延伸" disabled />
        <Small icon="offset" label="偏移" disabled />
        <Small icon="intersect" label="相交" disabled />
      </Col>
      <Col>
        <Small icon="project" label="投影" />
        <Small icon="thicken" label="加厚" disabled />
        <Small icon="solidify" label="实体化" disabled />
      </Col>
    </Group>
    <Group title="曲面" width="w-[110px] shrink-0" menu>
      <Big icon="boundary" lines={["边界", "混合"]} />
      <Col>
        <Small icon="fill" label="填充" />
        <Small icon="style" label="样式" />
        <Small icon="freestyle" label="自由式" />
      </Col>
    </Group>
    <Group title="WJT276" width="w-[86px] shrink-0">
      <Big icon="random" lines={["随机", "着色"]} />
      <Big icon="transparent" lines={["设透", "明度"]} />
    </Group>
    <Group title="标准件" width="w-[122px] shrink-0">
      <Big icon="table" lines={["族表"]} />
      <Col>
        <Small icon="modelSize" label="模型大小" />
        <Small icon="updateHole" label="更新孔" disabled />
        <Small icon="udf" label="UDF 库" />
      </Col>
    </Group>
    <div className="flex items-start pt-[2px] pl-[7px]">
      <Big icon="diameter" lines={["直径"]} />
    </div>
  </div>
);

/* ---------- title bar and tabs ---------- */

const QuickButton = ({ icon, label }: { icon: string; label: string }) => (
  <button aria-label={label} className="flex w-6 justify-center">
    <Icon name={icon} />
  </button>
);

const QuickCaret = ({ dim }: { dim?: boolean }) => (
  <button aria-label="更多" className="flex w-[14px] justify-center">
    <Caret className={dim ? "text-[#9a9d9f]" : "text-[#444]"} />
  </button>
);

const TitleBar = () => (
  <header className="flex h-7 items-center bg-[#d9dfdf]">
    <div className="flex w-[86px] items-center gap-[6px] pl-3">
      <Icon name="part" />
      <span className="pb-[2px] font-[Inter,sans-serif] text-[17px] leading-5 text-[#4b5052]">creo·</span>
    </div>
    <div className="mr-[2px] h-6 w-px bg-[#a5abad]" />
    <QuickButton icon="newFile" label="新建" />
    <QuickButton icon="open" label="打开" />
    <QuickButton icon="save" label="保存" />
    <QuickButton icon="undo" label="撤消" />
    <QuickCaret dim />
    <QuickButton icon="redo" label="重做" />
    <QuickCaret dim />
    <QuickButton icon="regen" label="重新生成" />
    <QuickButton icon="windows" label="窗口" />
    <QuickCaret />
    <QuickButton icon="closeWin" label="关闭" />
    <div className="h-6 w-px bg-[#a5abad]" />
    <button aria-label="自定义快速访问工具栏" className="flex w-6 flex-col items-center gap-[2px]">
      <span className="h-px w-2 bg-[#333]" />
      <Caret className="text-[#333]" />
    </button>
    <h1 className="flex-1 pl-48 text-center text-[13px] text-[#333]">
      <Mixed text="PRT0001 (活动的) - Creo Parametric 7.0" latin="text-xs" />
    </h1>
  </header>
);

const tabs = ["WJT276工具箱", "WJT276-Ⅱ", "分析", "注释", "工具", "视图", "柔性建模", "应用程序"];

const TabBar = () => (
  <nav className="flex h-[26px] items-stretch bg-[#3c4648] pt-[3px] text-[13px] text-white">
    <button className="w-[66px] bg-gradient-to-b from-[#62cd42] to-[#4ba02f]">文件</button>
    <button className="w-[73px] bg-[#f8fafc] text-[#357a24]">模型</button>
    <div className="flex gap-[3px]">
      {tabs.map((t) => (
        <button key={t} className="px-[22px]">
          <Mixed text={t} latin="text-xs" />
        </button>
      ))}
    </div>
  </nav>
);

/* ---------- model tree ---------- */

const treeRows = [
  { icon: "part", name: "PRT0001.PRT", no: "", root: true },
  { icon: "body", name: "主体 (1)", no: "", expand: true },
  { icon: "csys", name: "DEFAULT_CSYS", no: "1" },
  { icon: "plane", name: "RIGHT", no: "2" },
  { icon: "plane", name: "TOP", no: "3" },
  { icon: "plane", name: "FRONT", no: "4" },
  { icon: "extrude", name: "拉伸 1", no: "5", expand: true },
  { icon: "projectGray", name: "投影 1", no: "6", expand: true, dim: true },
  { icon: "designate", name: "Designate Area 1", no: "7" },
];

const TreeTable = () => (
  <div className="pr-[5px] pl-2">
    <table className="w-full table-fixed border-collapse text-xs leading-4 text-[#333]">
      <colgroup>
        <col className="w-[200px]" />
        <col className="w-[30px]" />
        <col />
      </colgroup>
      <thead>
        <tr className="h-[18px] border-b border-[#cfd3d5] text-black">
          <th className="border-r border-[#cfd3d5] p-0" aria-label="名称" />
          <th className="overflow-hidden border-r border-[#cfd3d5] p-0 pl-[5px] text-left font-normal whitespace-nowrap">
            特<span className="text-[#aaa]">征</span>
          </th>
          <th className="overflow-hidden p-0 pl-[5px] text-left font-normal">
            <Mixed text="DRAWING_NO" />
          </th>
        </tr>
      </thead>
      <tbody>
        {treeRows.map((r) => (
          <tr key={r.name} className={clsx("h-[18px]", r.dim && "text-[#b5b7b8]")}>
            <td className="border-r border-[#e4e8ea] p-0">
              <div className={clsx("flex items-center", r.root ? "pl-[3px]" : "pl-2")}>
                {!r.root && (
                  <span className="w-[15px]">
                    {r.expand && (
                      <svg viewBox="0 0 8 10" className="h-[10px] w-2">
                        <path d="M.5 .5v9L7.500 5z" fill="#858a8c" />
                      </svg>
                    )}
                  </span>
                )}
                <Icon name={r.icon} />
                <span className="pl-1">
                  <Mixed text={r.name} />
                </span>
              </div>
            </td>
            <td className="p-0 pl-px">
              <Mixed text={r.no} />
            </td>
            <td className="p-0" />
          </tr>
        ))}
        <tr className="h-[6px]">
          <td className="border-r border-[#e4e8ea] p-0" />
          <td className="p-0" colSpan={2} />
        </tr>
        <tr className="h-[26px] border-t-2 border-[#64c641] bg-[#e3e3e3] text-[#777]">
          <td className="border-r border-[#f8fafc] p-0 pt-[6px]">
            <div className="flex items-center pl-[23px]">
              <Icon name="cosmetic" className="size-4 opacity-80" />
              <span className="pl-1">
                <span className="mr-[2px] inline-block size-1 bg-[#666] align-middle" />
                <Mixed text="修饰草绘 1" />
              </span>
            </div>
          </td>
          <td className="p-0 pt-[6px] pl-px whitespace-nowrap" colSpan={2}>
            <Mixed text="<无>" />
          </td>
        </tr>
      </tbody>
    </table>
  </div>
);

const SidePanel = () => (
  <aside className="flex w-[304px] shrink-0 flex-col border-r-[3px] border-[#d9e0e0] bg-[#f8fafc] text-[#333]">
    <div className="flex h-[30px] bg-[#d9e0e0] text-xs">
      <button className="flex w-[76px] items-center gap-[6px] bg-[#f8fafc] pl-[9px]">
        <Icon name="treeTab" />
        <span className="pt-[2px]">模型树</span>
      </button>
      <button className="flex w-[110px] items-center gap-1 pl-[9px]">
        <Icon name="folders" className="size-[18px]" />
        <span className="pt-[2px]">文件夹浏览器</span>
      </button>
      <button className="flex items-center gap-1 pl-[9px]">
        <Icon name="favorites" className="size-[18px]" />
        <span className="pt-[2px]">收藏夹</span>
      </button>
    </div>
    <div className="flex h-7 items-center pr-2 pl-7">
      <h2 className="pt-[2px] text-[13px] font-bold">模型树</h2>
      <div className="ml-auto flex items-center gap-[6px]">
        <button aria-label="设置">
          <Icon name="tools" className="size-5" />
        </button>
        <button aria-label="设置选项" className="pr-1">
          <Caret />
        </button>
        <button aria-label="显示">
          <Icon name="docList" className="size-[18px]" />
        </button>
        <button aria-label="显示选项" className="pr-[6px]">
          <Caret />
        </button>
        <button aria-label="树列">
          <Icon name="treeCols" className="size-[22px]" />
        </button>
      </div>
    </div>
    <div className="mb-[5px] flex h-6 items-center pl-3">
      <Icon name="filter" />
      <div className="ml-1 flex h-6 flex-1 items-center border border-[#a0b0b3] bg-white pr-[5px]">
        <input aria-label="搜索模型树" className="min-w-0 flex-1 bg-transparent px-1 text-xs outline-none" />
        <button aria-label="清除">
          <svg viewBox="0 0 8 8" className="size-2">
            <path d="M0 0l8 8M8 0L0 8" stroke="#999" strokeWidth="1.200" />
          </svg>
        </button>
      </div>
      <button aria-label="搜索选项" className="flex w-[18px] justify-center">
        <Caret />
      </button>
      <button aria-label="添加" className="mr-3 ml-[6px]">
        <svg viewBox="0 0 12 12" className="size-3">
          <path d="M6 .5v11M.5 6h11" stroke="#9b9fa1" strokeWidth="3" />
        </svg>
      </button>
    </div>
    <TreeTable />
    <div className="ml-[207px] flex-1 border-l border-[#e4e8ea]" />
  </aside>
);

/* ---------- graphics window ---------- */

const ViewToolbar = () => (
  <div className="absolute top-[7px] right-[26px] flex h-8 w-[426px] items-center border border-[#999ea0] bg-[#f8fafc] px-[2px]">
    {viewIcons.map(([label, art]) => (
      <button key={label} aria-label={label} className="flex flex-1 justify-center">
        <svg viewBox="0 0 18 18" className="size-[18px]">
          {art}
        </svg>
      </button>
    ))}
  </div>
);

const Cylinder = () => (
  <svg className="absolute inset-0 size-full" aria-hidden="true">
    <defs>
      <linearGradient id="side" gradientUnits="userSpaceOnUse" x1="266" y1="367" x2="605" y2="391">
        <stop offset="0" stopColor="#8b97a4" />
        <stop offset=".06" stopColor="#97a4b2" />
        <stop offset=".22" stopColor="#a1aebd" />
        <stop offset=".38" stopColor="#9ca9b7" />
        <stop offset=".55" stopColor="#8d99a6" />
        <stop offset=".68" stopColor="#7d8892" />
        <stop offset=".78" stopColor="#6f7680" />
        <stop offset=".88" stopColor="#575e68" />
        <stop offset="1" stopColor="#555c66" />
      </linearGradient>
      <linearGradient id="patch" x1="0" x2="1">
        <stop offset="0" stopColor="#a3aeff" />
        <stop offset=".5" stopColor="#949fe4" />
        <stop offset="1" stopColor="#7983b8" />
      </linearGradient>
    </defs>
    <path
      d="M276.800 206.500L253.500 537.500A170.100 40 4.100 0 0 592.800 560.500L616.200 229.500z"
      fill="url(#side)"
    />
    <path d="M253.500 537.500A170.100 40 4.100 0 0 592.800 560.500" fill="none" stroke="#22272c" />
    <path d="M276.800 206.500L253.500 537.500M616.200 229.500L592.800 560.500" stroke="#6f7a86" strokeWidth=".7" />
    <ellipse
      cx="446.500"
      cy="218"
      rx="170.100"
      ry="40"
      transform="rotate(4.100 446.500 218)"
      fill="#85909d"
      stroke="#22272c"
    />
    <path
      d="M382 319.500Q452 331 528.500 327L523 402.500Q450 407 376.500 395.500z"
      fill="url(#patch)"
      stroke="#15181c"
      strokeWidth="1.100"
    />
    <g fontFamily="Liberation Mono, monospace" fontSize="38" fill="none" stroke="#1d222b" textAnchor="middle">
      <text x="436" y="374">
        N
      </text>
      <text x="474" y="374">
        2
      </text>
    </g>
  </svg>
);

const Watermark = () => (
  <div className="absolute right-[18px] bottom-[7px] flex flex-col items-end">
    <div className="relative flex gap-[6px] text-[40px] leading-9 italic">
      <span className="text-[#fb6a36]">野火</span>
      <span className="text-black">论坛</span>
      <svg viewBox="0 0 20 44" className="absolute -top-5 left-[64px] h-11 w-5">
        <path d="M5 0Q19 10 17 26 15 36 7 41 2 41 2 37 8 28 9 20 9 13 2 9 9 10 11 16 12 8 5 0z" fill="#fb6a36" />
      </svg>
    </div>
    <span className="pt-1 pr-[6px] font-['DejaVu_Sans',sans-serif] text-[15px] leading-4 text-[#9496a0] italic">
      www.proewildfire.cn
    </span>
  </div>
);

const GraphicsWindow = () => (
  <main className="relative flex-1 overflow-hidden bg-[linear-gradient(#c4daea_0%,#b1c9e0_24%,#a0bed8_40%,#8fafce_58%,#809fc5_80%,#6f8fb7_100%)]">
    <Cylinder />
    <ViewToolbar />
    <Watermark />
  </main>
);

/* ---------- step marks ---------- */

const badges = [
  { n: 1, x: 123, y: 397 },
  { n: 2, x: 713, y: 274 },
  { n: 3, x: 874, y: 521 },
];

const StepMarks = () => (
  <svg className="absolute inset-0 size-full">
    <g fill="none" stroke="#fd3637">
      <rect x="5.500" y="388.500" width="98" height="18" />
      <rect x="588.500" y="262.500" width="116" height="26" />
      <rect x="670.500" y="472.500" width="183" height="103" />
    </g>
    <path d="M150 418.500L168 411.500 167 416 330 438.500 664 486.500 330 445.500 166 424 165 427.500z" fill="#fd3637" />
    {badges.map(({ n, x, y }) => (
      <g key={n}>
        <circle cx={x} cy={y} r="10" fill="#fd3637" />
        <text x={x} y={y + 4} textAnchor="middle" fontSize="13" fontFamily="Open Sans, sans-serif" fill="#fff">
          {n}
        </text>
      </g>
    ))}
  </svg>
);

export default function App() {
  return (
    <div className="relative flex min-h-screen flex-col overflow-hidden border-t-4 border-l-4 border-[#a2a0a0] font-['Liberation_Mono','Noto_Sans_CJK_SC',monospace]">
      <TitleBar />
      <TabBar />
      <Ribbon />
      <div className="flex flex-1">
        <SidePanel />
        <GraphicsWindow />
      </div>
      <div className="pointer-events-none absolute -top-1 right-0 bottom-0 -left-1 z-30">
        <StepMarks />
      </div>
    </div>
  );
}
